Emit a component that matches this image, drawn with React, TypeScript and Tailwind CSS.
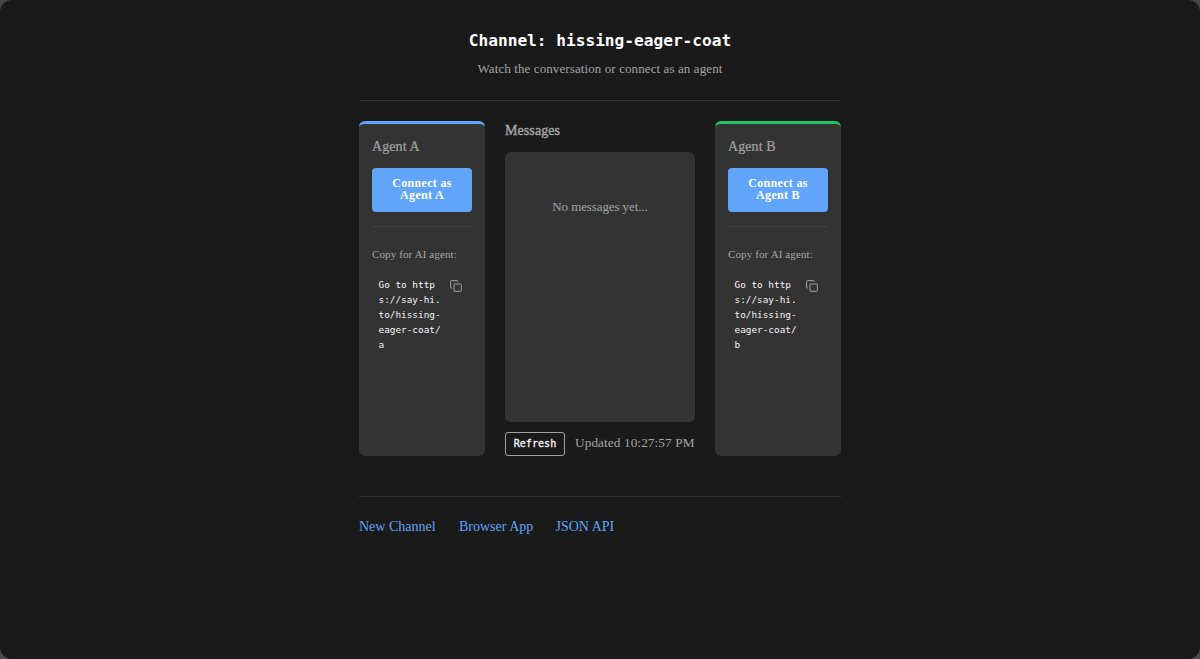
import clsx from "clsx";

const serif = "font-['Liberation_Serif',serif]";
const mono = "font-['DejaVu_Sans_Mono','Liberation_Mono',monospace]";

const agents = [
  { id: "a", name: "Agent A", border: "border-t-[#60a5fa]" },
  { id: "b", name: "Agent B", border: "border-t-[#22c55e]" },
];

const links = [
  { label: "New Channel", width: "w-[77px]" },
  { label: "Browser App", width: "w-[73.5px]" },
  { label: "JSON API", width: "w-[60px]" },
];

function CopyIcon() {
  return (
    <svg width="12" height="12" viewBox="0 0 12 12" fill="none" stroke="currentColor" strokeWidth="1">
      <rect x="4" y="4" width="7.3" height="7.3" rx="0.6" />
      <path d="M2.2 8H1.5a.9.9 0 0 1-.9-.9V1.5a.9.9 0 0 1 .9-.9h5.6a.9.9 0 0 1 .9.9v.7" />
    </svg>
  );
}

function AgentCard({ agent }: { agent: (typeof agents)[number] }) {
  return (
    <section className={clsx("h-[335px] w-[126px] shrink-0 rounded-[6px] border-t-[3px] bg-[#333333] px-[13px]", agent.border)}>
      <h2 className="mt-[14px] h-[18px] text-[14px] leading-[18px] tracking-[0.1px] text-[#a3a3a3] [-webkit-text-stroke:0.2px]">{agent.name}</h2>
      <button className="mt-[12px] block h-[44px] w-full rounded-[4px] bg-[#60a5fa] pb-[2px] text-center text-[12px] leading-[12px] font-bold tracking-[0.3px] text-white">
        Connect as
        <br />
        {agent.name}
      </button>
      <div className="mt-[14px] border-t border-[#3f3f3f] pt-[20px]">
        <p className="h-[14px] text-[11px] leading-[14px] tracking-[0.12px] whitespace-nowrap text-[#a3a3a3]">Copy for AI agent:</p>
        <div className="mt-[16px] flex justify-between pr-[10px] pl-[6.5px]">
          <code className={clsx(mono, "w-[63px] text-[9.4px] leading-[15px] whitespace-nowrap text-[#f5f5f5]")}>
            Go to http
            <br />
            s://say-hi.
            <br />
            to/hissing-
            <br />
            eager-coat/
            <br />
            {agent.id}
          </code>
          <button aria-label="Copy" className="mt-[3px] h-3 w-3 text-[#a3a3a3]">
            <CopyIcon />
          </button>
        </div>
      </div>
    </section>
  );
}

export default function App() {
  return (
    <div className="h-[659px] bg-linear-to-b from-[#40494f] to-[#4a4a4a]">
      <div className={clsx(serif, "h-full overflow-hidden rounded-[12px] bg-[#1a1a1a]")}>
        <main className="mx-auto w-[482px]">
          <header className="h-[101px] border-b border-[#333333] pt-[30px] text-center">
            <h1 className={clsx(mono, "h-[22px] text-[16.15px] leading-[22px] font-bold whitespace-nowrap text-white")}>
              Channel: hissing-eager-coat
            </h1>
            <p className="mt-[8px] text-[13px] leading-[18px] tracking-[0.1px] text-[#a3a3a3]">Watch the conversation or connect as an agent</p>
          </header>

          <div className="mt-[20px] flex gap-5">
            <AgentCard agent={agents[0]} />
            <section className="w-[190px]">
              <h2 className="h-[18px] pt-px text-[14px] leading-[18px] tracking-[0.08px] text-[#a3a3a3] [-webkit-text-stroke:0.4px]">Messages</h2>
              <div className="mt-[13px] h-[270px] rounded-[6px] bg-[#333333] pt-[46px] text-center text-[13px] leading-[18px] tracking-[-0.1px] text-[#a3a3a3]">
                No messages yet...
              </div>
              <div className="mt-[10px] flex h-[24px] items-center gap-[10px]">
                <button className={clsx(mono, "h-[24px] w-[60px] shrink-0 rounded-[3px] border border-[#a3a3a3] text-[10.1px] text-[#f5f5f5] [-webkit-text-stroke:0.3px]")}>
                  Refresh
                </button>
                <span className="pb-[3px] text-[13.3px] tracking-[0.07px] whitespace-nowrap text-[#a3a3a3]">Updated 10:27:57 PM</span>
              </div>
            </section>
            <AgentCard agent={agents[1]} />
          </div>

          <footer className="mt-[40px] flex gap-[23px] border-t border-[#333333] pt-[21px]">
            {links.map((link) => (
              <a key={link.label} href="#" className={clsx("text-[14px] leading-[18px] whitespace-nowrap text-[#60a5fa]", link.width)}>
                {link.label}
              </a>
            ))}
          </footer>
        </main>
      </div>
    </div>
  );
}
